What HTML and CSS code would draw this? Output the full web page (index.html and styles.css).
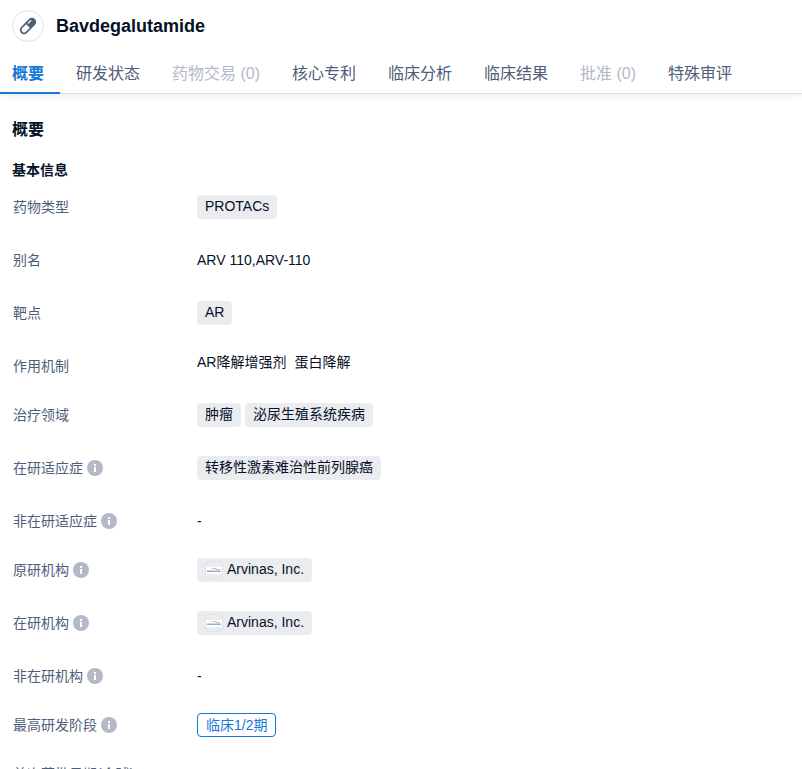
FILE: index.html
```html
<!DOCTYPE html>
<html lang="zh-CN">
<head>
    <meta charset="UTF-8">
    <meta name="viewport" content="width=device-width, initial-scale=1.0">
    <title>Bavdegalutamide</title>
    <link rel="stylesheet" href="styles.css">
</head>
<body>
    <!-- shared icons -->
    <svg class="sprite" aria-hidden="true">
        <symbol id="info" viewBox="0 0 16 16">
            <circle cx="8" cy="8" r="8" fill="#b3b9c6"/>
            <path d="M7 4h2v2H7zM7 7h2v5H7z" fill="#fff"/>
        </symbol>
        <symbol id="arvinas" viewBox="0 0 18 18">
            <rect x="0.5" y="0.5" width="17" height="17" rx="3.5" fill="#ebecf0" stroke="#e0e2e7"/>
            <rect x="1" y="6" width="16" height="7" fill="#fff"/>
            <path d="M7 7.2h4l1 .8h3v.8h-4l-1-.8H7z" fill="#f3a255"/>
            <path d="M2 10.3h14" stroke="#7fabd0" stroke-width="1.6" stroke-dasharray="2.4 .3"/>
        </symbol>
    </svg>

    <header class="header">
        <div class="drug">
            <span class="drug-icon">
                <svg width="18" height="18" viewBox="0 0 18 18" aria-hidden="true">
                    <g transform="rotate(-45 9 9)">
                        <rect x="-.8" y="4.8" width="19.6" height="8.4" rx="4.2" fill="#4e5d78"/>
                        <path d="M9 6.5H3.5a2.5 2.5 0 0 0 0 5H9z" fill="#fff"/>
                        <path d="M11.4 7.2h3.4" stroke="#fff" stroke-width="1.2" stroke-linecap="round"/>
                    </g>
                </svg>
            </span>
            <h1>Bavdegalutamide</h1>
        </div>
        <nav class="tabs">
            <a class="tab active" href="#overview">概要</a>
            <a class="tab" href="#status">研发状态</a>
            <a class="tab disabled" href="#deals">药物交易 (0)</a>
            <a class="tab" href="#patents">核心专利</a>
            <a class="tab" href="#analysis">临床分析</a>
            <a class="tab" href="#results">临床结果</a>
            <a class="tab disabled" href="#approval">批准 (0)</a>
            <a class="tab" href="#review">特殊审评</a>
        </nav>
    </header>

    <main class="content" id="overview">
        <h2>概要</h2>
        <h3>基本信息</h3>
        <dl class="info">
            <div class="row">
                <dt>药物类型</dt>
                <dd><span class="tag">PROTACs</span></dd>
            </div>
            <div class="row">
                <dt>别名</dt>
                <dd class="alias">ARV 110,ARV-110</dd>
            </div>
            <div class="row">
                <dt>靶点</dt>
                <dd><a class="tag" href="#ar">AR</a></dd>
            </div>
            <div class="row">
                <dt>作用机制</dt>
                <dd class="mechanism"><span>AR降解增强剂</span><span>蛋白降解</span></dd>
            </div>
            <div class="row">
                <dt>治疗领域</dt>
                <dd><span class="tag">肿瘤</span><span class="tag">泌尿生殖系统疾病</span></dd>
            </div>
            <div class="row">
                <dt>在研适应症<svg class="tip"><use href="#info"/></svg></dt>
                <dd><a class="tag" href="#indication">转移性激素难治性前列腺癌</a></dd>
            </div>
            <div class="row">
                <dt>非在研适应症<svg class="tip"><use href="#info"/></svg></dt>
                <dd>-</dd>
            </div>
            <div class="row">
                <dt>原研机构<svg class="tip"><use href="#info"/></svg></dt>
                <dd><a class="tag" href="#arvinas-inc"><svg class="logo"><use href="#arvinas"/></svg>Arvinas, Inc.</a></dd>
            </div>
            <div class="row">
                <dt>在研机构<svg class="tip"><use href="#info"/></svg></dt>
                <dd><a class="tag" href="#arvinas-inc"><svg class="logo"><use href="#arvinas"/></svg>Arvinas, Inc.</a></dd>
            </div>
            <div class="row">
                <dt>非在研机构<svg class="tip"><use href="#info"/></svg></dt>
                <dd>-</dd>
            </div>
            <div class="row">
                <dt>最高研发阶段<svg class="tip"><use href="#info"/></svg></dt>
                <dd><span class="phase">临床1/2期</span></dd>
            </div>
            <div class="row">
                <dt>首次获批日期(全球)</dt>
            </div>
        </dl>
    </main>
</body>
</html>
```
FILE: styles.css
```css
*{
    box-sizing: border-box;
}
body{
    height: 100vh;
    margin: 0;
    overflow: hidden;
    display: flex;
    flex-direction: column;
    background-color: #fff;
    color: #061126;
    font-family: "Liberation Sans", "Noto Sans CJK SC", sans-serif;
    font-size: 14px;
    line-height: 24px;
}
h1, h2, h3, dl, dd{
    margin: 0;
}
a{
    color: inherit;
    text-decoration: none;
}
.sprite{
    display: none;
}

/* header */
.header{
    flex: none;
    padding-top: 10px;
    border-bottom: 1px solid #dcdfe3;
    box-shadow: 0 2px 6px rgba(0, 0, 0, 0.08);
}
.drug{
    display: flex;
    align-items: center;
    gap: 12px;
    padding: 0 12px;
}
.drug-icon{
    display: flex;
    align-items: center;
    justify-content: center;
    width: 32px;
    height: 32px;
    border: 1px solid #dfe1e6;
    border-radius: 50%;
}
.drug h1{
    font-size: 18px;
}
.tabs{
    display: flex;
    gap: 8px;
    margin-bottom: -1px;
    padding-top: 12px;
}
.tab{
    padding: 8px 12px 6px;
    border-bottom: 2px solid transparent;
    color: #4e5d78;
    font-size: 16px;
    white-space: nowrap;
}
.tab.active{
    padding-right: 16px;
    margin-right: -4px;
    border-color: #1677d9;
    color: #1677d9;
    font-weight: bold;
}
.tab.disabled{
    color: #b3b9c6;
}

/* content */
.content{
    flex: 1;
    min-height: 0;
    overflow: hidden;
    padding: 24px 12px 0;
}
h2{
    font-size: 16px;
}
h3{
    margin: 16px 0 13px;
    font-size: 14px;
}
.row{
    display: flex;
    align-items: flex-start;
    margin-bottom: 25px;
}
dt{
    display: flex;
    align-items: center;
    gap: 4px;
    flex: none;
    width: 185px;
    padding-left: 1px;
    color: #4e5d78;
}
.tip{
    width: 16px;
    height: 16px;
}
dd{
    display: flex;
    flex-wrap: wrap;
    gap: 0 4px;
}
.tag{
    display: flex;
    align-items: center;
    gap: 4px;
    margin-bottom: 4px;
    padding: 0 8px 1px;
    border-radius: 4px;
    background-color: #ebecf0;
    line-height: 23px;
}
.logo{
    width: 18px;
    height: 18px;
}
.alias{
    margin-bottom: 4px;
}
.mechanism{
    gap: 0 8px;
    margin-top: -4px;
}
.phase{
    padding: 0 8px;
    border: 1px solid #1677d9;
    border-radius: 4px;
    color: #1677d9;
    line-height: 22px;
}
```
